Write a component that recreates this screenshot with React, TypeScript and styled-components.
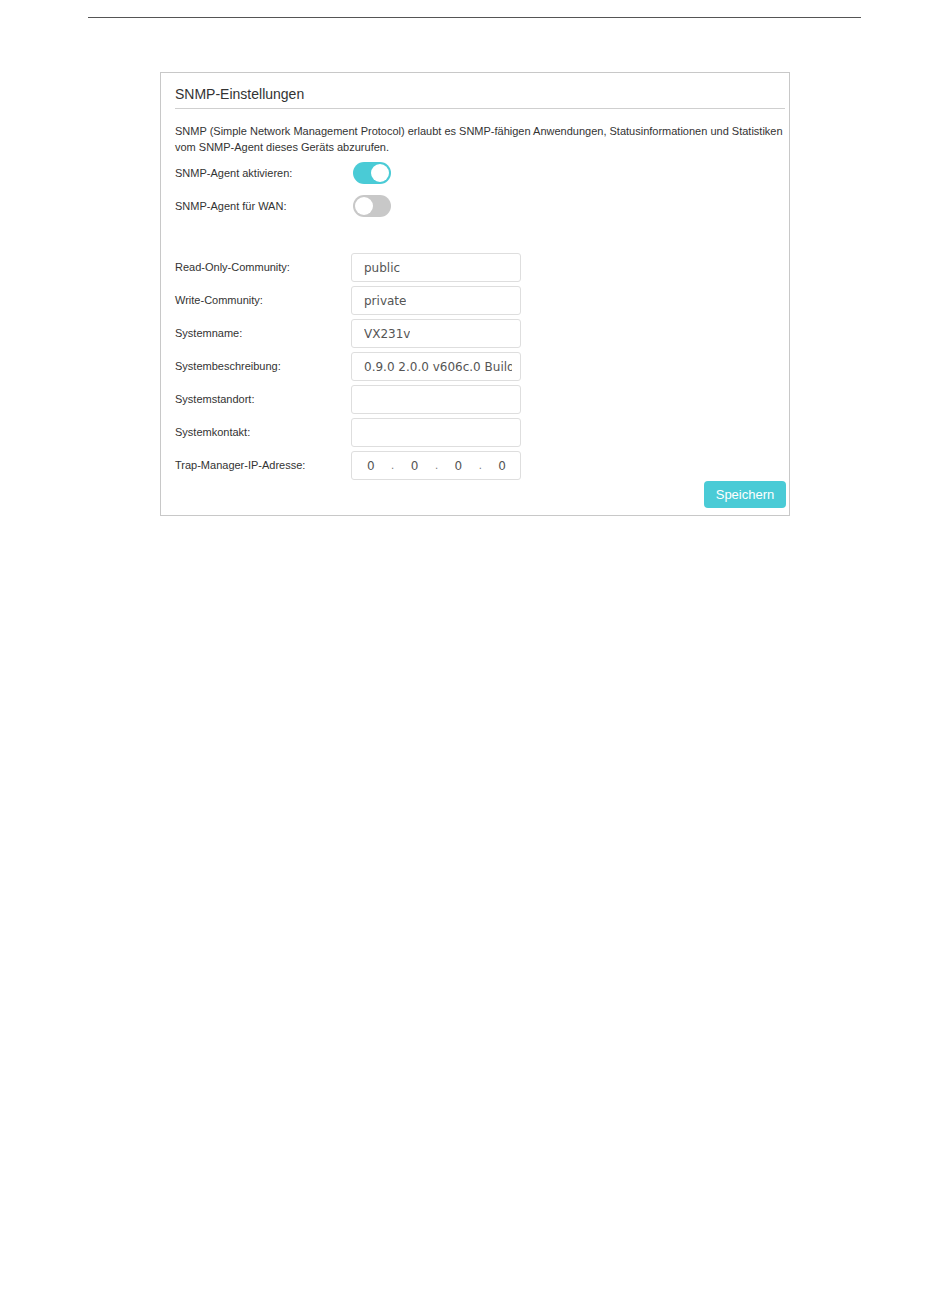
import styled, { createGlobalStyle } from "styled-components";

const GlobalStyle = createGlobalStyle`
  body {
    margin: 0;
    background: #ffffff;
    font-family: "Liberation Sans", Arial, sans-serif;
    color: #333333;
  }
`;

const Page = styled.div`
  width: 950px;
  min-height: 1297px;
`;

const TopRule = styled.div`
  margin-left: 88px;
  width: 773px;
  height: 17px;
  border-bottom: 1px solid #555555;
`;

const Panel = styled.section`
  margin: 54px 0 0 160px;
  width: 630px;
  box-sizing: border-box;
  border: 1px solid #c8c8c8;
  padding: 0 4px 7px 14px;
`;

const Title = styled.h2`
  margin: 0;
  padding: 11px 0 4px;
  font-size: 14px;
  line-height: 20px;
  font-weight: normal;
  color: #333333;
  border-bottom: 1px solid #cfcfcf;
`;

const Description = styled.p`
  margin: 14px 0 7px;
  font-size: 11px;
  line-height: 16px;
  color: #333333;
`;

const Row = styled.div<{ $gap?: number }>`
  display: flex;
  align-items: center;
  margin-top: ${(p) => p.$gap ?? 0}px;
`;

const Label = styled.span`
  width: 176px;
  flex-shrink: 0;
  font-size: 11px;
  line-height: 14px;
  margin-top: -1px;
  color: #333333;
`;

const Toggle = styled.span<{ $on: boolean }>`
  position: relative;
  display: inline-block;
  width: 38px;
  height: 22px;
  margin-left: 2px;
  border-radius: 11px;
  background: ${(p) => (p.$on ? "#4acbd6" : "#c8c8c8")};
  &::after {
    content: "";
    position: absolute;
    top: 2px;
    left: ${(p) => (p.$on ? "18px" : "2px")};
    width: 18px;
    height: 18px;
    border-radius: 50%;
    background: #ffffff;
  }
`;

const Field = styled.div`
  width: 170px;
  height: 29px;
  box-sizing: border-box;
  border: 1px solid #dedede;
  border-radius: 3px;
  padding: 0 8px 0 12px;
  display: flex;
  align-items: center;
  overflow: hidden;
  white-space: nowrap;
  font-family: "DejaVu Sans", "Open Sans", sans-serif;
  font-size: 12px;
  color: #555555;
`;

const FieldText = styled.span`
  display: block;
  overflow: hidden;
  white-space: nowrap;
  min-width: 0;
`;

const IpField = styled(Field)`
  padding: 0 14px 0 15px;
  justify-content: space-between;
`;

const Dot = styled.span`
  font-size: 10px;
  color: #777777;
`;

const Footer = styled.div`
  display: flex;
  justify-content: flex-end;
  margin-top: 1px;
`;

const SaveButton = styled.button`
  width: 82px;
  height: 27px;
  margin-right: -1px;
  border: none;
  border-radius: 4px;
  background: #4acbd6;
  color: #ffffff;
  font-family: "Liberation Sans", Arial, sans-serif;
  font-size: 13px;
  cursor: pointer;
`;

const fields = [
  { label: "Read-Only-Community:", value: "public" },
  { label: "Write-Community:", value: "private" },
  { label: "Systemname:", value: "VX231v" },
  { label: "Systembeschreibung:", value: "0.9.0 2.0.0 v606c.0 Build" },
  { label: "Systemstandort:", value: "" },
  { label: "Systemkontakt:", value: "" },
];

export default function App() {
  return (
    <Page>
      <GlobalStyle />
      <TopRule />
      <Panel>
        <Title>SNMP-Einstellungen</Title>
        <Description>
          SNMP (Simple Network Management Protocol) erlaubt es SNMP-fähigen
          Anwendungen, Statusinformationen und Statistiken
          <br />
          vom SNMP-Agent dieses Geräts abzurufen.
        </Description>
        <Row>
          <Label>SNMP-Agent aktivieren:</Label>
          <Toggle $on />
        </Row>
        <Row $gap={11}>
          <Label>SNMP-Agent für WAN:</Label>
          <Toggle $on={false} />
        </Row>
        {fields.map((f, i) => (
          <Row key={f.label} $gap={i === 0 ? 36 : 4}>
            <Label>{f.label}</Label>
            <Field>
              <FieldText>{f.value}</FieldText>
            </Field>
          </Row>
        ))}
        <Row $gap={4}>
          <Label>Trap-Manager-IP-Adresse:</Label>
          <IpField>
            <span>0</span>
            <Dot>.</Dot>
            <span>0</span>
            <Dot>.</Dot>
            <span>0</span>
            <Dot>.</Dot>
            <span>0</span>
          </IpField>
        </Row>
        <Footer>
          <SaveButton>Speichern</SaveButton>
        </Footer>
      </Panel>
    </Page>
  );
}
